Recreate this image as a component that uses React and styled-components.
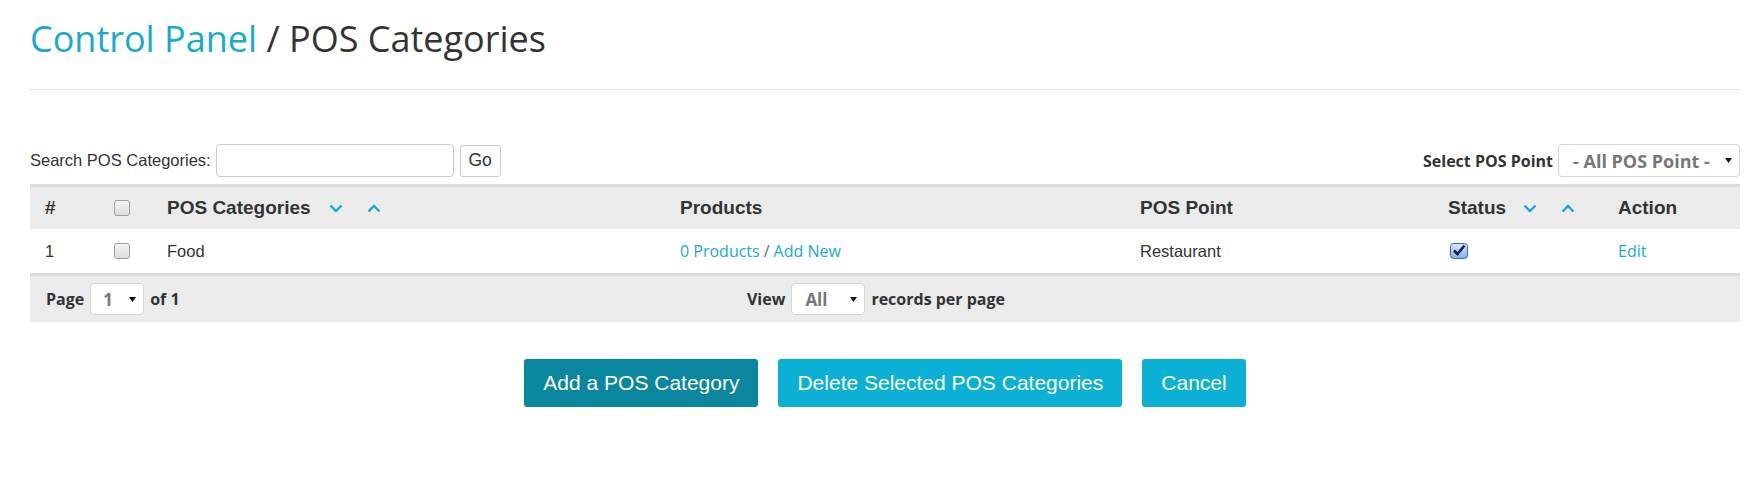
import React from "react";
import styled, { createGlobalStyle } from "styled-components";

const GlobalStyle = createGlobalStyle`
  html, body { margin: 0; padding: 0; background: #fff; }
  body { font-family: "Liberation Sans", Arial, sans-serif; color: #333; }
  * { box-sizing: border-box; }
`;

const CYAN = "#17aad0";
const COLS = "69px 53px 513px 460px 308px 170px 1fr";

const Page = styled.div`
  padding: 19px 13px 40px 30px;
`;

const Title = styled.h1`
  margin: 0;
  font-family: "Open Sans", sans-serif;
  font-weight: 400;
  font-size: 36px;
  line-height: 40px;
  color: #333;
`;

const Crumb = styled.span`
  color: ${CYAN};
`;

const Divider = styled.hr`
  margin: 30px 0 0;
  border: 0;
  border-top: 1px solid #e5e5e5;
`;

const Toolbar = styled.div`
  margin-top: 54px;
  display: flex;
  align-items: center;
  justify-content: space-between;
  height: 33px;
`;

const SearchGroup = styled.div`
  display: flex;
  align-items: center;
  gap: 5px;
`;

const Label = styled.span`
  font-family: ${(p) => (p.$bold ? '"Open Sans", sans-serif' : '"Liberation Sans", Arial, sans-serif')};
  font-weight: ${(p) => (p.$bold ? 700 : 400)};
  font-size: ${(p) => (p.$bold ? 16 : 16.5)}px;
  color: #333;
`;

const SearchInput = styled.input`
  width: 238px;
  height: 33px;
  border: 1px solid #ccc;
  border-radius: 4px;
  padding: 0 8px;
  font-size: 16px;
  outline: none;
`;

const GoButton = styled.button`
  width: 41px;
  height: 32px;
  margin-left: 1px;
  border: 1px solid #ccc;
  border-radius: 3px;
  background: #fff;
  font-family: "Liberation Sans", Arial, sans-serif;
  font-size: 17.5px;
  color: #333;
  padding: 0;
`;

const SelectBox = styled.div`
  display: inline-flex;
  align-items: center;
  justify-content: space-between;
  width: ${(p) => p.$w}px;
  height: ${(p) => p.$h || 32}px;
  padding: 0 7px 0 ${(p) => p.$pl || 12}px;
  background: #fff;
  border: 1px solid #d6d6d6;
  border-radius: 4px;
  font-family: "Open Sans", sans-serif;
  font-weight: 700;
  font-size: ${(p) => p.$fs || 17}px;
  color: #777;
`;

const Caret = () => (
  <svg width="7" height="5" viewBox="0 0 7 5">
    <path d="M0 0h7L3.5 5z" fill="#111" />
  </svg>
);

const Table = styled.div`
  margin-top: 7px;
`;

const HeadRow = styled.div`
  display: grid;
  grid-template-columns: ${COLS};
  height: 45px;
  border-top: 3px solid #dcdcdc;
  background: #ebebeb;
  font-family: "Liberation Sans", Arial, sans-serif;
  font-weight: 700;
  font-size: 19px;
  color: #333;
`;

const BodyRow = styled.div`
  display: grid;
  grid-template-columns: ${COLS};
  height: 44px;
  background: #fff;
  font-family: "Liberation Sans", Arial, sans-serif;
  font-size: 16.5px;
  color: #333;
`;

const Cell = styled.div`
  display: flex;
  align-items: center;
  padding-left: 15px;
`;

const Sorters = styled.span`
  display: inline-flex;
  align-items: center;
  gap: 24px;
  margin-left: ${(p) => p.$ml || 18}px;
`;

const Chevron = ({ up }) => (
  <svg width="14" height="9" viewBox="0 0 14 9">
    <path
      d={up ? "M1.5 7.5L7 2l5.5 5.5" : "M1.5 1.5L7 7l5.5-5.5"}
      fill="none"
      stroke={CYAN}
      strokeWidth="2.4"
    />
  </svg>
);

const Box = styled.span`
  display: inline-block;
  width: 16px;
  height: 16px;
  border: 1px solid #9d9d9d;
  border-radius: 3px;
  background: linear-gradient(#f4f4f4, #dcdcdc);
  box-shadow: inset 0 0 1px #fff;
`;

const CheckedBox = () => (
  <svg width="18" height="16" viewBox="0 0 18 16" style={{ marginLeft: 2 }}>
    <defs>
      <linearGradient id="cbg" x1="0" y1="0" x2="0" y2="1">
        <stop offset="0" stopColor="#dbeaff" />
        <stop offset="1" stopColor="#7eaef0" />
      </linearGradient>
    </defs>
    <rect x="0.5" y="0.5" width="17" height="15" rx="3" fill="url(#cbg)" stroke="#3d6aa8" />
    <path d="M4 7.5l3.5 3.5L14.5 2.5" fill="none" stroke="#1b2540" strokeWidth="2.6" />
  </svg>
);

const Link = styled.a`
  font-family: "Open Sans", sans-serif;
  font-size: 16px;
  color: ${CYAN};
  text-decoration: none;
`;

const Slash = styled.span`
  font-family: "Open Sans", sans-serif;
  font-size: 16px;
  color: #4a6f7c;
  margin: 0 4px;
`;

const FootRow = styled.div`
  display: grid;
  grid-template-columns: 1fr auto 1fr;
  align-items: center;
  height: 49px;
  border-top: 3px solid #dcdcdc;
  background: #ebebeb;
  font-family: "Open Sans", sans-serif;
  font-weight: 700;
  font-size: 16px;
  color: #333;
`;

const FootGroup = styled.div`
  display: flex;
  align-items: center;
  gap: ${(p) => p.$gap || 6}px;
  padding-left: ${(p) => p.$pl || 0}px;
  margin-right: ${(p) => p.$mr || 0}px;
`;

const Actions = styled.div`
  margin-top: 37px;
  display: flex;
  justify-content: center;
  gap: 20px;
`;

const ActionButton = styled.button`
  height: 48px;
  padding: 0 19px;
  border: 0;
  border-radius: 3px;
  background: ${(p) => (p.$dark ? "#0a869f" : "#0cb0d4")};
  color: #fff;
  font-family: "Liberation Sans", Arial, sans-serif;
  font-size: 21px;
  cursor: pointer;
`;

export default function App() {
  return (
    <>
      <GlobalStyle />
      <Page>
        <Title>
          <Crumb>Control Panel</Crumb> / POS Categories
        </Title>
        <Divider />

        <Toolbar>
          <SearchGroup>
            <Label>Search POS Categories:</Label>
            <SearchInput type="text" />
            <GoButton>Go</GoButton>
          </SearchGroup>
          <SearchGroup>
            <Label $bold>Select POS Point</Label>
            <SelectBox $w={182} $h={33} $pl={14} $fs={18}>
              <span>- All POS Point -</span>
              <Caret />
            </SelectBox>
          </SearchGroup>
        </Toolbar>

        <Table>
          <HeadRow>
            <Cell>#</Cell>
            <Cell>
              <Box />
            </Cell>
            <Cell>
              POS Categories
              <Sorters>
                <Chevron />
                <Chevron up />
              </Sorters>
            </Cell>
            <Cell>Products</Cell>
            <Cell>POS Point</Cell>
            <Cell>
              Status
              <Sorters $ml={17}>
                <Chevron />
                <Chevron up />
              </Sorters>
            </Cell>
            <Cell>Action</Cell>
          </HeadRow>

          <BodyRow>
            <Cell>1</Cell>
            <Cell>
              <Box />
            </Cell>
            <Cell>Food</Cell>
            <Cell>
              <Link href="#">0 Products</Link>
              <Slash>/</Slash>
              <Link href="#">Add New</Link>
            </Cell>
            <Cell>Restaurant</Cell>
            <Cell>
              <CheckedBox />
            </Cell>
            <Cell>
              <Link href="#">Edit</Link>
            </Cell>
          </BodyRow>

          <FootRow>
            <FootGroup $pl={16}>
              <span>Page</span>
              <SelectBox $w={54} $pl={12}>
                <span>1</span>
                <Caret />
              </SelectBox>
              <span>of 1</span>
            </FootGroup>
            <FootGroup $mr={18}>
              <span>View</span>
              <SelectBox $w={74} $pl={13}>
                <span>All</span>
                <Caret />
              </SelectBox>
              <span>records per page</span>
            </FootGroup>
            <div />
          </FootRow>
        </Table>

        <Actions>
          <ActionButton $dark>Add a POS Category</ActionButton>
          <ActionButton>Delete Selected POS Categories</ActionButton>
          <ActionButton>Cancel</ActionButton>
        </Actions>
      </Page>
    </>
  );
}
